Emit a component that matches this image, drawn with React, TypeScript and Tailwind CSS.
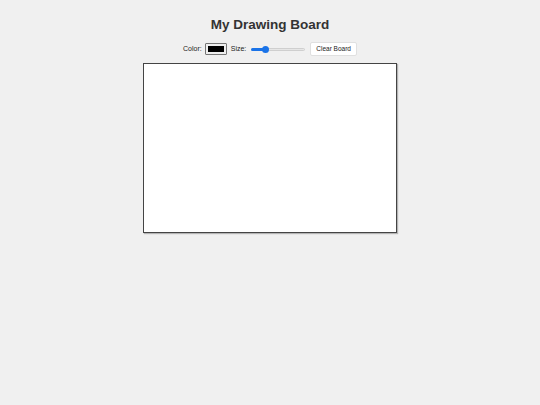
export default function App() {
  return (
    <div
      className="min-h-[405px] w-full bg-[#f0f0f0] flex flex-col items-center"
      style={{ fontFamily: '"Liberation Sans", Arial, sans-serif' }}
    >
      <h1 className="mt-[16px] text-[13.5px] leading-[18px] font-bold text-[#333]">My Drawing Board</h1>
      <div className="mt-[8px] flex items-center text-[7px] text-[#222] h-[14px]">
        <span>Color:</span>
        <div className="ml-[3px] w-[22px] h-[12px] border border-[#767676] bg-[#efefef] rounded-[1px] p-[2px] flex">
          <div className="flex-1 bg-black" />
        </div>
        <span className="ml-[4px]">Size:</span>
        <div className="ml-[5px] w-[54px] h-[8px] relative flex items-center">
          <div className="w-full h-[3px] rounded-full bg-[#e6e6e6] border border-[#cfcfcf]" />
          <div className="absolute left-0 h-[3px] w-[14px] rounded-full bg-[#1a73e8]" />
          <div className="absolute left-[11px] w-[7px] h-[7px] rounded-full bg-[#1a73e8]" />
        </div>
        <button className="ml-[5px] h-[14px] px-[5px] bg-white border border-[#e0e0e0] rounded-[2px] text-[6.5px] text-[#222]">
          Clear Board
        </button>
      </div>
      <div className="mt-[7px] w-[254px] h-[170px] bg-white border border-[#444] shadow-[1px_1px_1px_rgba(0,0,0,0.25)]" />
    </div>
  );
}
